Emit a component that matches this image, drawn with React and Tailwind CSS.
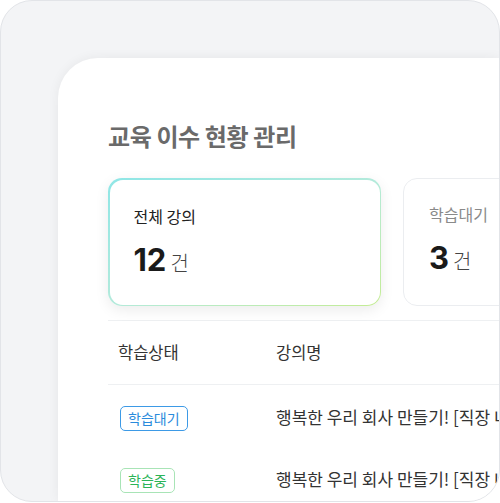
export default function App() {
  const font = { fontFamily: '"Noto Sans CJK KR", "Noto Sans", sans-serif' };
  const num = { fontFamily: 'Inter, "Noto Sans CJK KR", sans-serif' };
  return (
    <div className="w-[500px] h-[503px] bg-white" style={font}>
      <div className="w-[500px] h-[502px] rounded-[32px] border border-[#e2e4e8] bg-[#f3f4f6] overflow-hidden pt-[57px] pl-[57px]">
        <div className="h-full bg-white rounded-tl-[40px] shadow-[0_0_12px_rgba(0,0,0,0.06)] pl-[50px] pt-[62px] overflow-hidden">
          <h1 className="text-[24px] leading-[32px] font-semibold text-[#6a6a6a] tracking-[-0.4px]">교육 이수 현황 관리</h1>
          <div className="flex gap-[22px] mt-[26px] w-[600px]">
            <div className="w-[273px] h-[128px] rounded-[14px] p-[1.5px] bg-gradient-to-br from-[#8ee6e6] via-[#b3eadb] to-[#c4ec92] shadow-[0_4px_14px_rgba(0,0,0,0.08)] shrink-0">
              <div className="w-full h-full rounded-[13px] bg-white pl-[24px] pt-[24px]">
                <div className="text-[16px] leading-[24px] text-[#222]">전체 강의</div>
                <div className="flex items-baseline mt-[14px]">
                  <span className="text-[31px] leading-[36px] font-bold text-[#1a1a1a]" style={num}>12</span>
                  <span className="text-[20px] ml-[4px] text-[#444] font-light">건</span>
                </div>
              </div>
            </div>
            <div className="w-[273px] h-[128px] rounded-[14px] border border-[#ebedf0] bg-white pl-[25px] pt-[23px] shrink-0">
              <div className="text-[16px] leading-[24px] text-[#8a8a8a]">학습대기</div>
              <div className="flex items-baseline mt-[14px]">
                <span className="text-[31px] leading-[36px] font-bold text-[#1a1a1a]" style={num}>3</span>
                <span className="text-[20px] ml-[4px] text-[#444] font-light">건</span>
              </div>
            </div>
          </div>
          <div className="mt-[14px] border-t border-[#eef0f2] w-[600px]">
            <div className="flex items-center h-[64px] border-b border-[#eef0f2] text-[16.5px] text-[#333]">
              <div className="w-[168px] shrink-0 pl-[10px]">학습상태</div>
              <div>강의명</div>
            </div>
            <div className="flex items-center h-[64px] text-[17px] text-[#333] whitespace-nowrap">
              <div className="w-[168px] shrink-0 pl-[12px]">
                <span className="inline-flex items-center h-[25px] px-[7px] rounded-[5px] border-[1.5px] border-[#3d9ae6] text-[#2a8bdc] text-[14px]">학습대기</span>
              </div>
              <div>행복한 우리 회사 만들기! [직장 내 괴롭힘 예방교육]</div>
            </div>
            <div className="flex items-center h-[60px] text-[17px] text-[#333] whitespace-nowrap">
              <div className="w-[168px] shrink-0 pl-[12px]">
                <span className="inline-flex items-center h-[25px] px-[7px] rounded-[5px] border-[1.5px] border-[#a8e4b6] text-[#2bb457] text-[14px]">학습중</span>
              </div>
              <div>행복한 우리 회사 만들기! [직장 내 괴롭힘 예방교육]</div>
            </div>
          </div>
        </div>
      </div>
    </div>
  );
}
